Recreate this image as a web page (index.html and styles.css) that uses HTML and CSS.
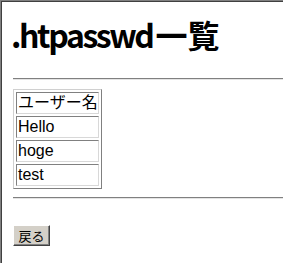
FILE: index.html
```html
<html>

<head>
    <meta charset="utf-8" />
    <link rel="stylesheet" href="styles.css">
</head>

<body>
    <div class="frame">
        <h1><span class="file">.htpasswd</span>一覧</h1>
        <hr>

        <table>
            <tr>
                <td>ユーザー名</td>
            </tr>
            <tr>
                <td>Hello</td>
            </tr>
            <tr>
                <td>hoge</td>
            </tr>
            <tr>
                <td>test</td>
            </tr>
        </table>

        <hr class="bottom">

        <form>
            <button type="button" class="back">戻る</button>
        </form>
    </div>
</body>
</html>
```

FILE: styles.css
```css
html, body {
    margin: 0;
    height: 100%;
    background-color: #ffffff;
}

.frame {
    box-sizing: border-box;
    min-height: 100%;
    padding: 0 0 0 10px;
    border-top: 1px solid #808080;
    border-left: 1px solid #808080;
    box-shadow: inset 1px 1px 0 #404040;
    font-family: "Liberation Sans", "Noto Sans CJK JP", sans-serif;
    font-size: 15px;
    color: #000000;
}

h1 {
    margin: 0;
    padding-top: 14px;
    height: 38px;
    font-family: "Noto Sans CJK JP", sans-serif;
    font-size: 32px;
    line-height: 38px;
    font-weight: bold;
}

h1 .file {
    letter-spacing: -2.4px;
    margin-right: 3px;
}

hr {
    height: 0;
    margin: 25px 0 9px 2px;
    border: 0;
    border-top: 1px solid #808080;
    border-bottom: 1px solid #e4e4e4;
}

hr.bottom {
    margin: 8px 0 26px 2px;
}

table {
    margin-left: 2px;
    border-collapse: separate;
    border-spacing: 2px;
    border: 1px solid;
    border-color: #d0d0d0 #808080 #808080 #d0d0d0;
}

td {
    padding: 1px 0 1px 1px;
    height: 18px;
    line-height: 18px;
    border: 1px solid;
    border-color: #808080 #d8d8d8 #d8d8d8 #808080;
    white-space: nowrap;
}

form {
    margin: 0 0 0 2px;
}

.back {
    width: 37px;
    height: 21px;
    padding: 0;
    font-family: "Noto Sans CJK JP", sans-serif;
    font-size: 13px;
    color: #000000;
    background-color: #d4d0c8;
    border: 1px solid;
    border-color: #ffffff #404040 #404040 #ffffff;
    box-shadow: inset -1px -1px 0 #808080;
}
```
